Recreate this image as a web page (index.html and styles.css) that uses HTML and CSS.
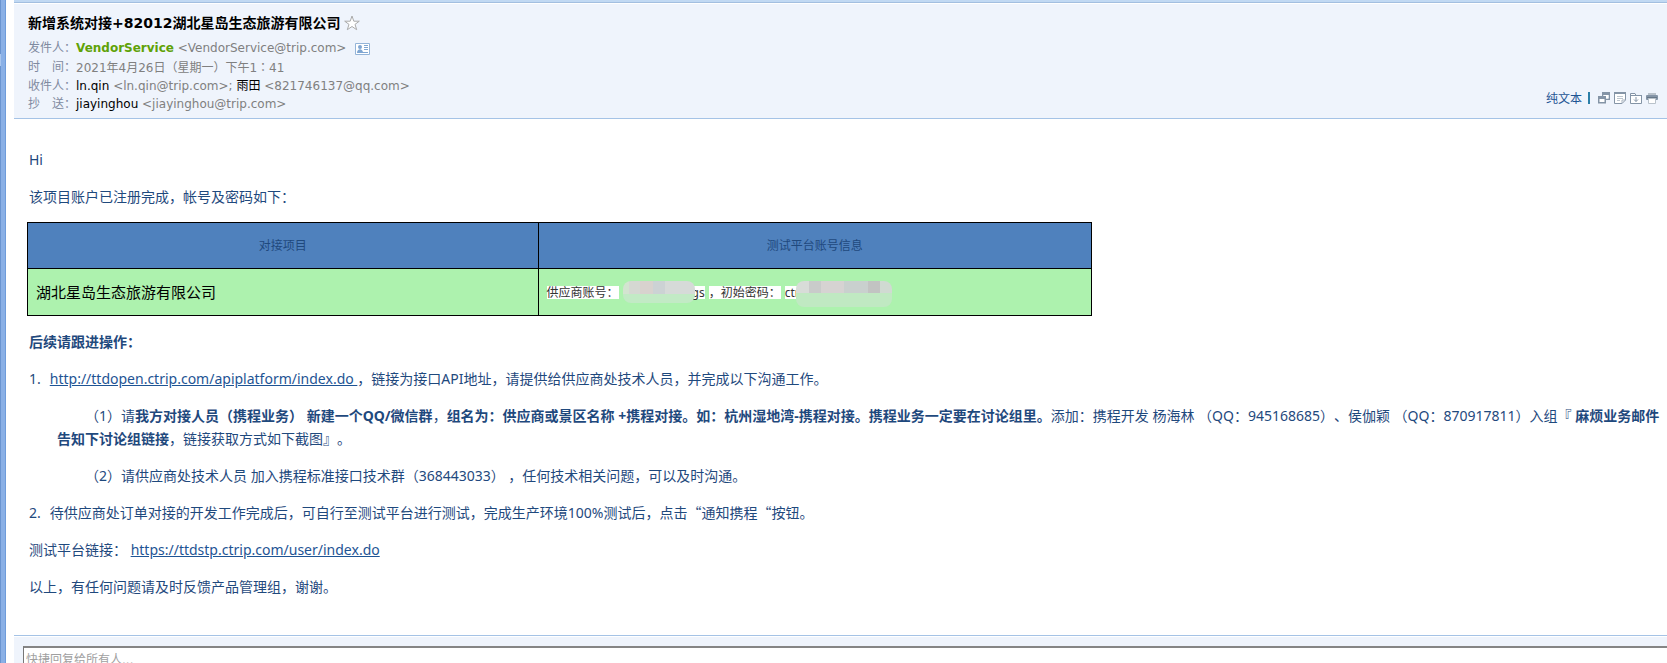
FILE: index.html
```
<!DOCTYPE html>
<html lang="zh-CN">
<head>
<meta charset="utf-8">
<title>新增系统对接</title>
<link rel="stylesheet" href="styles.css">
</head>
<body>
<div class="app">
  <div class="splitter"><button class="splitter-handle" aria-label="收起"></button></div>
  <main class="mail">
    <div class="toolbar-edge"></div>
    <header class="mail-head">
      <div class="mail-info">
        <h1 class="subject">新增系统对接+82012湖北星岛生态旅游有限公司
          <button class="icon-btn" aria-label="星标"><svg width="16" height="16" viewBox="0 0 16 16"><path d="M8 1 9.800 6.200H15.300L11 9.400 12.700 14.700 8 11.500 3.300 14.700 5 9.400.7 6.200H6.200Z" fill="#fff" stroke="#aaa"/></svg></button>
        </h1>
        <dl class="meta">
          <div class="meta-row meta-from"><dt>发件人：</dt><dd><b class="sender">VendorService</b> &lt;VendorService@trip.com&gt;
            <button class="icon-btn card" aria-label="联系人"><svg width="15" height="12" viewBox="0 0 15 12"><path d="M.5.5h14v11H.5z" fill="#fff" stroke="#94b4d8"/><circle cx="5" cy="4" r="2" fill="#7fa6d2"/><path d="M2 10c0-5 6-5 6 0zM9 2h4v1H9zM9 4h4v1H9zM9 6h4v1H9zM3 9h10v1H3z" fill="#7fa6d2"/></svg></button></dd></div>
          <div class="meta-row"><dt>时　间：</dt><dd>2021年4月26日（星期一）下午1<span class="centered" lang="zh-TW">：</span>41</dd></div>
          <div class="meta-row"><dt>收件人：</dt><dd><span class="name">ln.qin</span> &lt;ln.qin@trip.com&gt;; <span class="name">雨田</span> &lt;821746137@qq.com&gt;</dd></div>
          <div class="meta-row"><dt>抄　送：</dt><dd><span class="name">jiayinghou</span> &lt;jiayinghou@trip.com&gt;</dd></div>
        </dl>
      </div>
      <div class="actions">
        <a href="#" class="plain">纯文本</a><span class="bar"></span>
        <button class="icon-btn" aria-label="新窗口"><svg width="12" height="12" viewBox="0 0 12 12"><path d="M4 0h8v8H8V6.500h2.500V3h-5v1H4z" fill="#8494a6"/><path d="M5.500 3h5v3.500H8V4H5.500z" fill="#fff"/><path d="M0 4h8v7.500H0z" fill="#8494a6"/><path d="M1.500 7h5v3h-5z" fill="#fff"/></svg></button>
        <button class="icon-btn" aria-label="便签"><svg width="12" height="12" viewBox="0 0 12 12" fill="none" stroke="#8494a6"><path d="M.5 1v10.500H8L11.500 8V1z" fill="#fff"/><path d="M0 1h12" stroke-width="2"/><path d="M8 11.500V8h3.500" stroke="#a8b3bf"/><path d="M3 4.500h6M3 6.500h6M3 8.500h3" stroke="#bcc5ce"/></svg></button>
        <button class="icon-btn" aria-label="存档"><svg width="12" height="12" viewBox="0 0 12 12" fill="none" stroke="#8494a6"><path d="M.5 11.500V1.500H5l1 2h5.500v8z" fill="#fff"/><path d="M0 3.500h12M6 5v4.500M4 7.500l2 2 2-2"/></svg></button>
        <button class="icon-btn" aria-label="打印"><svg width="12" height="12" viewBox="0 0 12 12"><path d="M2 1h8v2H2z" fill="#b9c2cb"/><rect y="3" width="12" height="5" rx="1" fill="#8494a6"/><path d="M1 5h10v1H1z" fill="#667788"/><path d="M2.500 6.500h7v5h-7z" fill="#fff" stroke="#b9c2cb"/></svg></button>
      </div>
    </header>
    <article class="content">
      <p>Hi</p>
      <p>该项目账户已注册完成，帐号及密码如下：</p>
      <table class="accounts">
        <thead><tr><th>对接项目</th><th class="col-info">测试平台账号信息</th></tr></thead>
        <tbody><tr><td class="company">湖北星岛生态旅游有限公司</td>
          <td><div class="credentials"><span class="mark">供应商账号：</span><span class="masked"><i class="mosaic mosaic-a"></i><span class="mark">gs</span></span><span class="mark">，初始密码：</span><span class="masked"><span class="mark">ctr</span><i class="mosaic mosaic-b"></i></span></div></td></tr></tbody>
      </table>
      <p><b>后续请跟进操作：</b></p>
      <p class="item"><span>1.</span><span><a href="#">http://ttdopen.ctrip.com/apiplatform/index.do&nbsp;</a>，链接为接口API地址，请提供给供应商处技术人员，并完成以下沟通工作。</span></p>
      <p class="sub">（1）请<b>我方对接人员（携程业务） 新建一个QQ/微信群</b>，<b>组名为：供应商或景区名称 +携程对接。如：杭州湿地湾-携程对接。携程业务一定要在讨论组里。</b>添加：携程开发 杨海林 （QQ：945168685）、侯伽颖 （QQ：870917811）入组『 <b>麻烦业务邮件<br>告知下讨论组链接</b>，链接获取方式如下截图』。</p>
      <p class="sub">（2）请供应商处技术人员 加入携程标准接口技术群（368443033） ，任何技术相关问题，可以及时沟通。</p>
      <p class="item"><span>2.</span><span>待供应商处订单对接的开发工作完成后，可自行至测试平台进行测试，完成生产环境100%测试后，点击<span class="cjk">“</span>通知携程<span class="cjk">“</span>按钮。</span></p>
      <p>测试平台链接： <a href="#">https://ttdstp.ctrip.com/user/index.do</a></p>
      <p>以上，有任何问题请及时反馈产品管理组，谢谢。</p>
    </article>
    <footer class="reply"><input class="reply-box" type="text" aria-label="快捷回复" placeholder="快捷回复给所有人..."></footer>
  </main>
</div>
</body>
</html>
```
FILE: styles.css
```
* { box-sizing: border-box; }
body { margin: 0; background: #fff; font-family: "DejaVu Sans", "Noto Sans CJK SC", sans-serif; font-size: 12px; text-spacing-trim: space-all; }
p, h1, dl, dd { margin: 0; }
a { color: #1e5494; }
.app { display: flex; height: 100vh; overflow: hidden; }
.splitter { flex: none; width: 6px; margin-right: 8px; background: linear-gradient(90deg, #6a94d0 0 1px, #8ab0e6 1px 5px, #6f9cda 5px); }
.splitter-handle { display: block; width: 1px; height: 12px; margin: 54px 0 0; padding: 0; border: 0; background: #a9c6ee; }
.mail { flex: 1; min-width: 0; display: flex; flex-direction: column; }
.toolbar-edge { flex: none; height: 3px; background: #c1d9f3; border-bottom: 1px solid #a3bfe0; }
.mail-head { flex: none; display: flex; justify-content: space-between; align-items: flex-end; margin-top: 1px; padding: 8px 9px 5px 14px; background: #eff4fc; border-bottom: 1px solid #a5c3e6; }
.subject { display: flex; align-items: center; gap: 4px; height: 22px; font-size: 14px; font-weight: bold; line-height: 22px; color: #000; }
.icon-btn { padding: 0; border: 0; background: none; line-height: 0; }
.icon-btn svg { display: block; }
.meta { margin-top: 4px; color: #808080; }
.meta-row { display: flex; line-height: 18px; white-space: nowrap; }
.meta-from { line-height: 20px; }
.meta-row dt { width: 48px; color: #7f8aa0; }
.sender { color: #5fa207; }
.name { color: #000; }
.card { margin-left: 5px; vertical-align: middle; }
.centered { font-family: "Noto Sans CJK TC", sans-serif; }
.actions { display: flex; align-items: center; gap: 4px; height: 28px; padding-bottom: 3px; }
.plain { text-decoration: none; }
.bar { width: 2px; height: 12px; margin: 0 4px 0 2px; background: #2b7fa8; }
.content { flex: none; padding: 29px 0 37px 15px; overflow: hidden; font-family: "Noto Sans", "Noto Sans CJK SC", sans-serif; font-size: 14px; line-height: 23px; color: #1f497d; white-space: nowrap; }
.content p { margin-top: 14px; }
.content p:first-child { margin-top: 0; }
.item { display: flex; gap: 9px; }
.content .sub { margin-left: 28px; text-indent: 28px; }
.cjk { font-family: "Noto Sans CJK SC", sans-serif; }
.accounts { width: 65%; margin: 14px 0 0 -2px; border-collapse: collapse; table-layout: fixed; line-height: 20px; }
.accounts th, .accounts td { height: 46px; padding: 0 8px; border: 1px solid #000; }
.accounts td { height: 47px; background: #adf2ae; }
.accounts th { background: #4f81bd; font-size: 12px; font-weight: normal; }
.col-info { width: 52%; }
.accounts .company { font-size: 15px; color: #000; }
.credentials { display: flex; align-items: center; gap: 4px; font-size: 12px; color: #333; }
.mark { background: #fff; line-height: 13px; }
.masked { display: flex; align-items: center; height: 22px; }
.mosaic { width: 72px; height: 22px; border-radius: 8px; }
.mosaic-a { margin-right: -3px; background: linear-gradient(90deg, #d3e4d0 0 8%, #d5d8d2 8% 24%, #d8d2ce 24% 42%, #ccd2d4 42% 58%, #d6dad8 58%) 0 0 / 100% 13px no-repeat #c2eac5; z-index: 1; }
.mosaic-b { width: 96px; height: 26px; margin: 3px 0 0 -4px; background: linear-gradient(90deg, #d8dcd8 0 14%, #c9cbca 14% 26%, #d6d3d2 26% 50%, #c9d0ce 50% 75%, #c2c3c2 75% 87%, #d0dad2 87%) 0 0 / 100% 12px no-repeat #c0e9c2; z-index: 1; }
.reply { flex: 1; min-height: 28px; border-top: 1px solid #a5c3e6; padding: 10px 0 0 9px; background: linear-gradient(#fff 0 1px, #eff4fc 1px); overflow: hidden; }
.reply-box { display: block; width: 100%; height: 26px; padding: 0 2px; border: 1px solid #777; border-top: 2px solid #858585; border-right: 0; background: #fff; font: 12px "DejaVu Sans", "Noto Sans CJK SC", sans-serif; }
.reply-box::placeholder { color: #a0a0a0; opacity: 1; }
```
